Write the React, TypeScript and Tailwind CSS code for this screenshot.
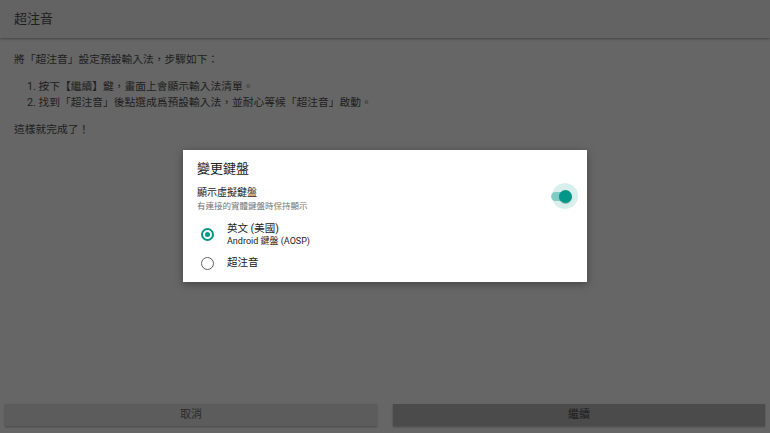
import React from "react";

const font = { fontFamily: "Roboto, 'Noto Sans CJK TC', 'Noto Sans', sans-serif" };

export default function App() {
  return (
    <div
      className="relative w-[770px] h-[433px] overflow-hidden bg-[#666666] flex flex-col text-[#1c1c1c]"
      style={font}
    >
      <div className="h-[38px] shrink-0 flex items-center px-[14px] bg-[#636363] shadow-[0_1px_2px_rgba(0,0,0,0.35)] text-[13px] text-[#1e1e1e]">
        超注音
      </div>
      <div className="flex-1 px-[14px] text-[10.75px] leading-[16px] text-[#1e1e1e]">
        <p className="mt-[14px]">將「超注音」設定預設輸入法，步驟如下：</p>
        <ol className="mt-[11px] pl-[13px]">
          <li>1. 按下【繼續】鍵，畫面上會顯示輸入法清單。</li>
          <li>2. 找到「超注音」後點選成爲預設輸入法，並耐心等候「超注音」啟動。</li>
        </ol>
        <p className="mt-[11px]">這樣就完成了！</p>
      </div>
      <div className="flex gap-[16px] px-[5px] pb-[7px]">
        <button className="flex-1 h-[22px] bg-[#5c5c5c] shadow-[0_1px_2px_rgba(0,0,0,0.3)] text-[11px] text-[#2a2a2a]">
          取消
        </button>
        <button className="flex-1 h-[22px] bg-[#4b4b4b] shadow-[0_1px_2px_rgba(0,0,0,0.3)] text-[11px] text-[#1e1e1e]">
          繼續
        </button>
      </div>

      <div className="absolute left-[183px] top-[150px] w-[404px] h-[132px] bg-white shadow-[0_2px_8px_rgba(0,0,0,0.35)] px-[14px] pt-[11px]">
        <div className="text-[13px] leading-[16px] text-[#212121]">變更鍵盤</div>
        <div className="mt-[9px] flex items-start justify-between">
          <div>
            <div className="text-[10px] leading-[14px] text-[#212121]">顯示虛擬鍵盤</div>
            <div className="text-[8.5px] leading-[12px] text-[#757575]">有連接的實體鍵盤時保持顯示</div>
          </div>
          <div className="relative w-[26px] h-[26px] mr-[-5px] mt-[-3px] flex items-center justify-center">
            <div className="absolute inset-0 rounded-full bg-[#009688]/15" />
            <div className="absolute w-[19px] h-[9px] rounded-full bg-[#009688]/40" style={{ right: 8 }} />
            <div className="absolute w-[13px] h-[13px] rounded-full bg-[#009688] shadow-[0_1px_1px_rgba(0,0,0,0.25)]" style={{ left: 7 }} />
          </div>
        </div>
        <div className="mt-[10px] flex items-center">
          <div className="w-[13px] h-[13px] ml-[4px] rounded-full border-[2px] border-[#009688] flex items-center justify-center">
            <div className="w-[5px] h-[5px] rounded-full bg-[#009688]" />
          </div>
          <div className="ml-[13px]">
            <div className="text-[10.5px] leading-[13px] text-[#212121]">英文 (美國)</div>
            <div className="text-[9px] leading-[12px] text-[#212121]">Android 鍵盤 (AOSP)</div>
          </div>
        </div>
        <div className="mt-[9px] flex items-center">
          <div className="w-[13px] h-[13px] ml-[4px] rounded-full border-[1.5px] border-[#616161]" />
          <div className="ml-[13px] text-[10.5px] leading-[14px] text-[#212121]">超注音</div>
        </div>
      </div>
    </div>
  );
}
